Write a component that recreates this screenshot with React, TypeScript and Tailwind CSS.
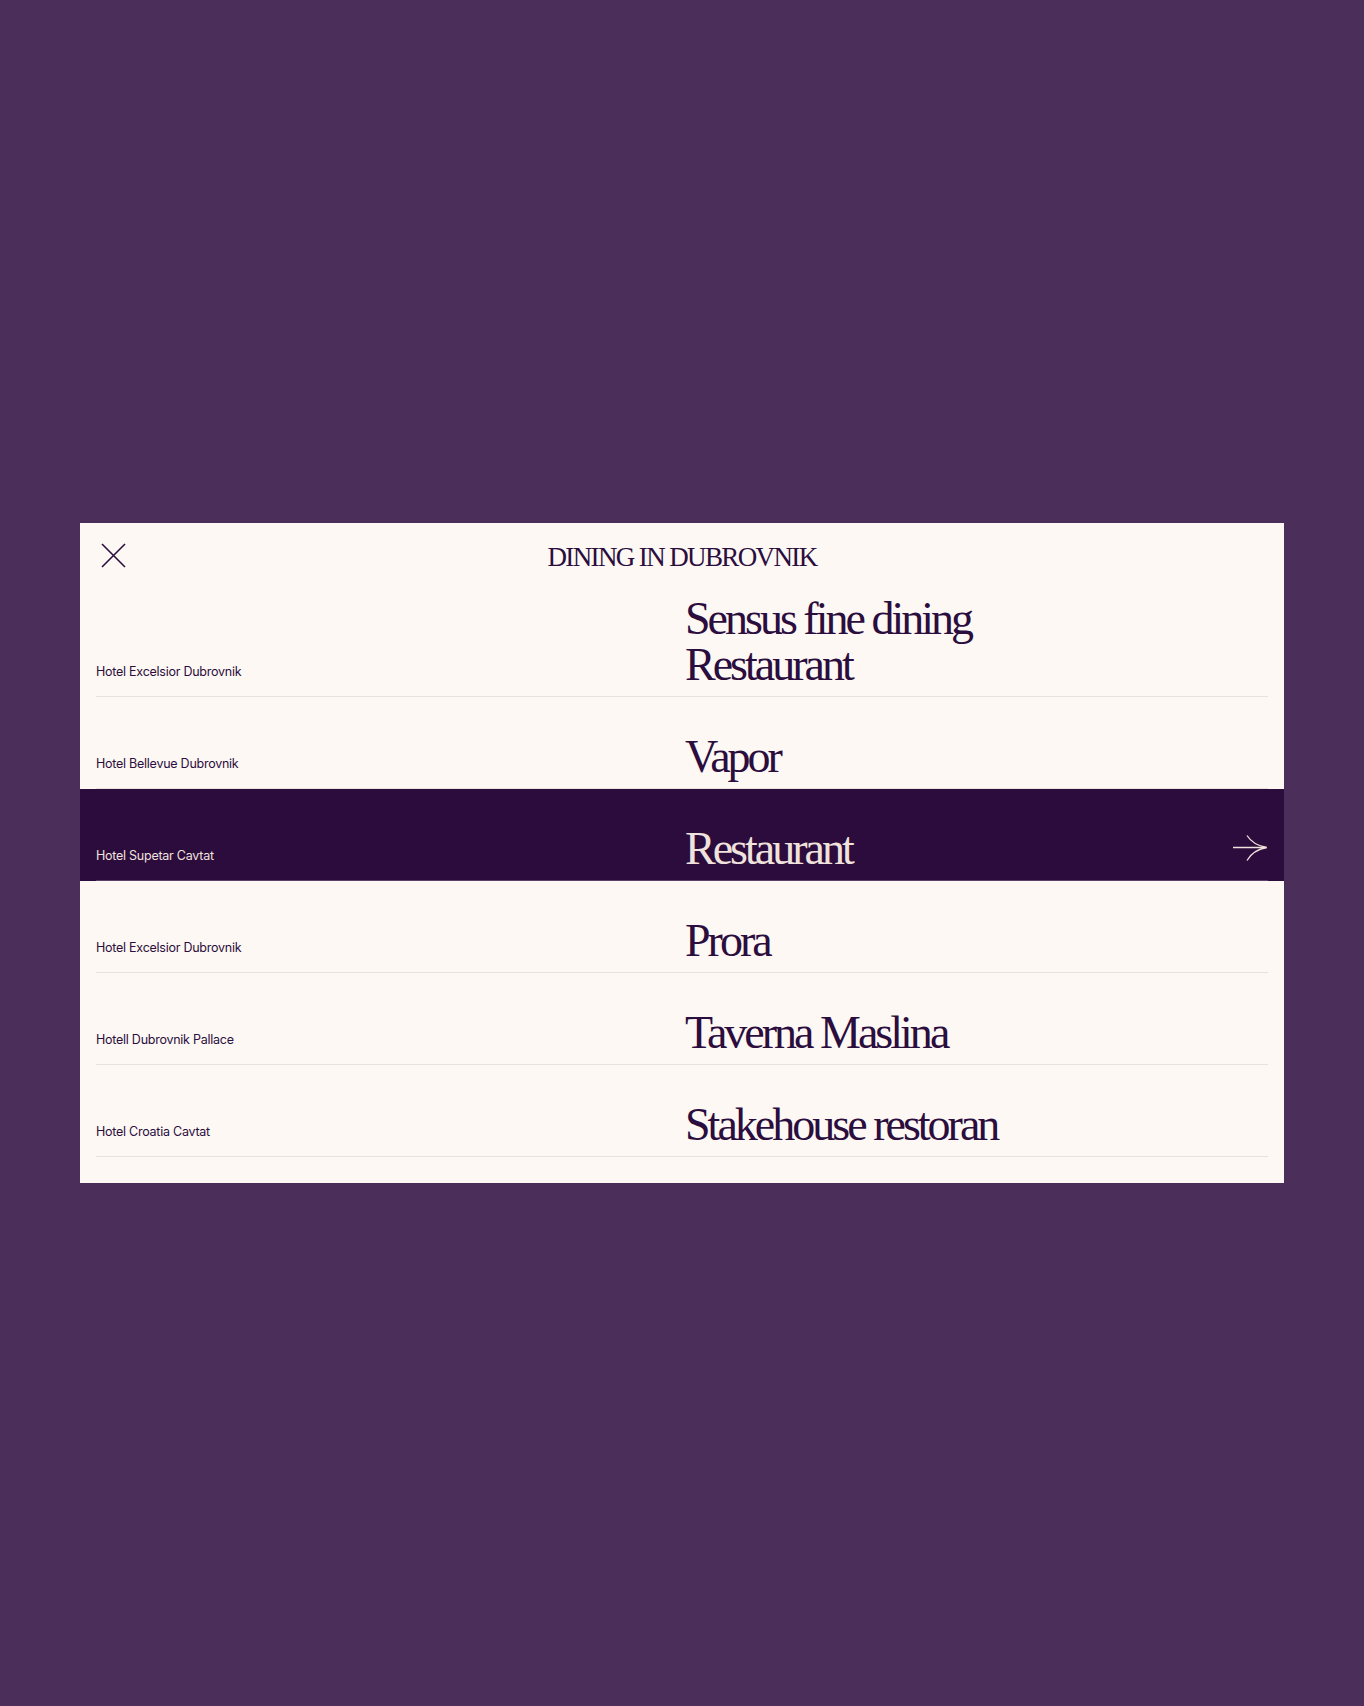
import React from "react";

type Venue = {
  hotel: string;
  name: React.ReactNode;
  active?: boolean;
};

const venues: Venue[] = [
  {
    hotel: "Hotel Excelsior Dubrovnik",
    name: (
      <>
        Sensus fine dining
        <br />
        Restaurant
      </>
    ),
  },
  { hotel: "Hotel Bellevue Dubrovnik", name: "Vapor" },
  { hotel: "Hotel Supetar Cavtat", name: "Restaurant", active: true },
  { hotel: "Hotel Excelsior Dubrovnik", name: "Prora" },
  { hotel: "Hotell Dubrovnik Pallace", name: "Taverna Maslina" },
  { hotel: "Hotel Croatia Cavtat", name: "Stakehouse restoran" },
];

function CloseIcon() {
  return (
    <svg width="25" height="25" viewBox="0 0 25 25" fill="none" className="text-[#2b0d3e]">
      <path d="M1 1L24 24M24 1L1 24" stroke="currentColor" strokeWidth="1.6" />
    </svg>
  );
}

function ArrowIcon() {
  return (
    <svg width="35" height="27" viewBox="0 0 35 27" fill="none" className="text-[#f0e2dc]">
      <path d="M0 12.5H33.5" stroke="currentColor" strokeWidth="1.3" />
      <path d="M14 0.5Q20 10 33.5 12.5" stroke="currentColor" strokeWidth="1.3" />
      <path d="M14 25.5Q20 15 33.5 12.5" stroke="currentColor" strokeWidth="1.3" />
    </svg>
  );
}

function VenueRow({ venue, first }: { venue: Venue; first: boolean }) {
  const dark = venue.active;
  return (
    <div className={dark ? "bg-[#2c0b3d]" : ""}>
      <div
        className={`mx-4 grid grid-cols-2 items-end border-b pb-[8px] ${first ? "pt-[28px]" : "pt-[37px]"} ${
          dark ? "border-[#5c4169]" : "border-[#e7e2dd]"
        }`}
      >
        <div
          className={`pb-[6px] font-['Inter',sans-serif] text-[12.5px] leading-[20px] tracking-[-0.02em] ${
            dark ? "text-[#f0e2dc]" : "text-[#2b0d3e]"
          }`}
        >
          {venue.hotel}
        </div>
        <div className="flex items-end justify-between">
          <div
            className={`pl-[3px] font-['Liberation_Serif',serif] text-[46px] leading-[46px] tracking-[-0.065em] ${
              dark ? "text-[#f0e2dc]" : "text-[#2b0d3e]"
            }`}
          >
            {venue.name}
          </div>
          {dark && (
            <div className="mb-[10px]">
              <ArrowIcon />
            </div>
          )}
        </div>
      </div>
    </div>
  );
}

export default function App() {
  return (
    <div className="flex h-screen w-full items-center justify-center bg-[#4b2e5a]">
      <div className="w-[1204px] bg-[#fdf8f3] pt-5 pb-[26px]">
        <div className="grid h-[25px] grid-cols-[1fr_auto_1fr] items-start px-4">
          <button className="ml-[5px] h-[25px] w-[25px]" aria-label="Close">
            <CloseIcon />
          </button>
          <h1 className="mt-[4px] font-['Liberation_Serif',serif] text-[27px] leading-[21px] tracking-[-0.06em] text-[#2b0d3e]">
            DINING IN DUBROVNIK
          </h1>
          <div />
        </div>
        <div>
          {venues.map((v, i) => (
            <VenueRow key={i} venue={v} first={i === 0} />
          ))}
        </div>
      </div>
    </div>
  );
}
